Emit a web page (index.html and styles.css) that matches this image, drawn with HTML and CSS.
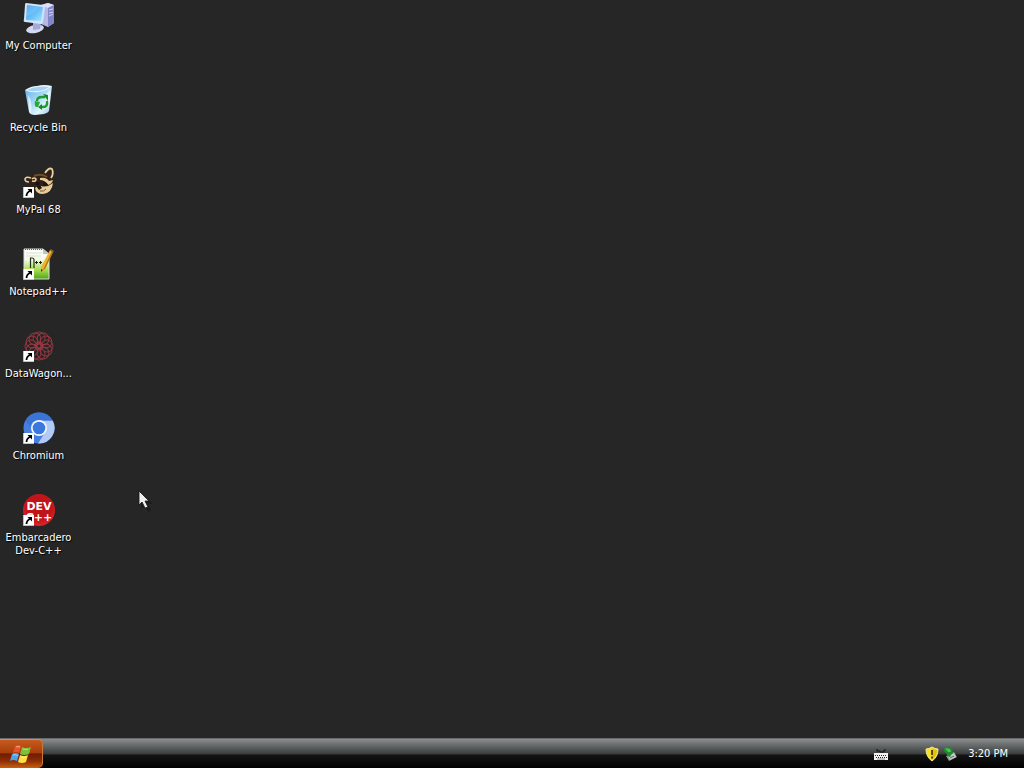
FILE: index.html
```html
<!doctype html>
<html lang="en">
    <head>
        <meta charset="UTF-8" />
        <meta name="viewport" content="width=device-width, initial-scale=1.0" />
        <title>Desktop</title>
        <link rel="stylesheet" href="styles.css">
    </head>
    <body>
        <svg class="defs" width="0" height="0" aria-hidden="true">
            <defs>
                <!-- shortcut arrow, shared by the icons -->
                <g id="shortcut">
                    <rect x="0" y="21" width="11" height="11" fill="#fff" />
                    <path d="M0 31.500h11M.5 21v11" stroke="#999" stroke-width=".6" />
                    <path d="M4.500 23H9v4.500z" fill="#000" />
                    <path d="M7.500 24.500Q3.500 26.500 3.500 30" fill="none" stroke="#000" stroke-width="1.800" />
                </g>
                <linearGradient id="screen" x1="0" y1="0" x2="1" y2="1">
                    <stop offset="0" stop-color="#3f97ea" />
                    <stop offset=".6" stop-color="#6cc6fa" />
                    <stop offset="1" stop-color="#a4e4ff" />
                </linearGradient>
                <linearGradient id="bin" x1="0" y1="0" x2="1" y2="1">
                    <stop offset="0" stop-color="#5aaeea" />
                    <stop offset=".45" stop-color="#a8d8f6" />
                    <stop offset=".7" stop-color="#e4f5fd" />
                    <stop offset="1" stop-color="#82bde2" />
                </linearGradient>
                <linearGradient id="paper" x1="0" y1="0" x2="0" y2="1">
                    <stop offset="0" stop-color="#fff" />
                    <stop offset=".35" stop-color="#f4fbe8" />
                    <stop offset=".7" stop-color="#a6dc4e" />
                    <stop offset="1" stop-color="#4fa41c" />
                </linearGradient>
                <radialGradient id="red" cx=".5" cy=".4" r=".6">
                    <stop offset="0" stop-color="#b8141a" />
                    <stop offset=".7" stop-color="#c5141a" />
                    <stop offset="1" stop-color="#e0262b" />
                </radialGradient>
            </defs>
        </svg>

        <main class="desktop">
            <button class="icon" type="button">
                <svg width="32" height="32" viewBox="0 0 32 32">
                    <path d="M18 3l7-2 6 2v18l-6 4-7-3z" fill="#b4b8e8" />
                    <path d="M18 3l7-2 6 2-6 3z" fill="#dcdff8" />
                    <path d="M25 6l6-3v18l-6 4z" fill="#8086c8" />
                    <path d="M26 8l4-1M26 11l4-1M26 14l4-2" stroke="#d4d8fa" />
                    <ellipse cx="12" cy="27" rx="9" ry="4" fill="#d5d8f2" transform="rotate(-12 12 27)" />
                    <path d="M10 20l8 1-1 6-7 1z" fill="#a4aada" />
                    <path d="M3 1l17 2q2 0 2 2l-2 15q0 2-2 2L2 20q-2 0-1-3L2 3q0-2 1-2z" fill="#d3e4fa" />
                    <path d="M4 3l16 2-2 14-15-1z" fill="url(#screen)" />
                    <path d="M4 3l12 2C12 9 10 13 3 14z" fill="#9bdcff" opacity=".3" />
                </svg>
                <span class="label">My Computer</span>
            </button>

            <button class="icon" type="button">
                <svg width="32" height="32" viewBox="0 0 32 32">
                    <path d="M2 6l12 1 15-5-3 25q-1 2-5 3l-9 1q-5 0-6-3z" fill="url(#bin)" />
                    <path d="M2 6q6-4 12-4 7-2 15 0-5 5-14 6-8 1-13-2z" fill="#eaf7ff" />
                    <path d="M4 6q6-3 11-3 5-1 11 0-5 4-12 4-6 1-10-1z" fill="#a4d2f3" />
                    <path d="M5 11q5 7 3 18-2 0-2-2zM27 5l-2 21-1-16z" fill="#f4fcff" opacity=".7" />
                    <path d="M14 17q0-4 5-4h3M24 17q1 6-4 6h-3" fill="none" stroke="#1d9b2e" stroke-width="2.400" />
                    <path d="M20 10l5 1v6zM19 20v6l-4-3z" fill="#168a25" />
                    <path d="M12 17l5 1-2 5h-2q-2-2-1-6z" fill="#2aa83a" />
                </svg>
                <span class="label">Recycle Bin</span>
            </button>

            <button class="icon" type="button">
                <svg width="32" height="32" viewBox="0 0 32 32">
                    <path d="M5 12Q12 7 20 7l6-5 4 3v13q-2 10-14 9L6 22z" fill="#2f2118" />
                    <path d="M22 7q4-6 7-4 2 5-1 9" fill="none" stroke="#ead0a0" stroke-width="1.800" />
                    <path d="M8 12q-5-2-6 1 0 3 4 3M9 13q2-2 4 0 0 3-4 2" fill="none" stroke="#e9cda0" stroke-width="1.600" />
                    <path d="M11 10q7-3 13 1" fill="none" stroke="#6e4d2c" stroke-width="2" />
                    <path d="M17 12q6-1 9 3l4-1q-1 4-5 5-3-5-8-5z" fill="#e7cb98" />
                    <path d="M12 17q3-2 5 0l-1 2h-4zM20 16q4 0 5 3l-4 1z" fill="#1c1511" />
                    <path d="M12 22q3-3 6-2 6 2 12-3-1 10-10 11-7 0-8-6z" fill="#e7cb98" />
                    <path d="M13 20l4-1 2 3-3 2z" fill="#21170f" />
                    <path d="M17 25q4 1 6-2" fill="none" stroke="#77552f" />
                    <use href="#shortcut" />
                </svg>
                <span class="label">MyPal 68</span>
            </button>

            <button class="icon" type="button">
                <svg width="32" height="32" viewBox="0 0 32 32">
                    <path d="M1 1h19l6 5v25H1z" fill="url(#paper)" stroke="#d8ddd5" />
                    <path d="M20 1v5h6z" fill="#bfc6ba" />
                    <path d="M2 1.500h18" stroke="#666" stroke-dasharray="1 1" />
                    <path d="M3 5h16M3 8h15" stroke="#d7e2d2" />
                    <path d="M7.500 20V10H9q2 0 2 2v8" fill="none" stroke="#25321b" stroke-width="1.200" />
                    <path d="M12 14.500h3M13.500 13v3M16 14.500h3M17.500 13v3" stroke="#18220f" />
                    <path d="M27 2l3 2-8 17-4 3v-5z" fill="#efb42e" />
                    <path d="M29 3l1 1-8 17-2 1z" fill="#b97318" />
                    <path d="M27 2l1-1 3 2-1 2z" fill="#8c5a37" />
                    <path d="M18 21l2 1-2 2z" fill="#54371b" />
                    <use href="#shortcut" />
                </svg>
                <span class="label">Notepad++</span>
            </button>

            <button class="icon" type="button">
                <svg width="32" height="32" viewBox="0 0 32 32">
                    <g fill="none" stroke="#9c3842" stroke-width=".9">
                        <!-- overlapping rings around the middle -->
                        <g id="rings">
                            <circle cx="16" cy="8" r="6" />
                            <circle cx="24" cy="16" r="6" />
                            <circle cx="16" cy="24" r="6" />
                            <circle cx="8" cy="16" r="6" />
                        </g>
                        <use href="#rings" transform="rotate(30 16 16)" />
                        <use href="#rings" transform="rotate(60 16 16)" />
                        <circle cx="16" cy="16" r="4" />
                    </g>
                    <use href="#shortcut" />
                </svg>
                <span class="label">DataWagon...</span>
            </button>

            <button class="icon" type="button">
                <svg width="32" height="32" viewBox="0 0 32 32">
                    <circle cx="16" cy="16" r="15.500" fill="#477fe0" />
                    <path d="M16 8.500h13.600A15.500 15.500 0 0 1 15 31.500l7.500-12z" fill="#b2cbf6" />
                    <path d="M2.500 8.500A15.500 15.500 0 0 1 29.600 8.500H16L9 17z" fill="#3a74d6" />
                    <circle cx="16" cy="16" r="8" fill="#f2f7ff" />
                    <circle cx="16" cy="16" r="6.300" fill="#3979df" />
                    <use href="#shortcut" />
                </svg>
                <span class="label">Chromium</span>
            </button>

            <button class="icon" type="button">
                <svg width="32" height="32" viewBox="0 0 32 32">
                    <circle cx="16" cy="16" r="16" fill="url(#red)" />
                    <text class="dev" text-anchor="middle"><tspan x="16" y="16">DEV</tspan><tspan x="16" y="27">C++</tspan></text>
                    <use href="#shortcut" />
                </svg>
                <span class="label">Embarcadero Dev-C++</span>
            </button>

            <svg class="cursor" width="16" height="22" viewBox="0 0 16 22">
                <path d="M3 3v16l4-3 3 6 3-2-3-6h5z" fill="#111" opacity=".5" />
                <path d="M1 1v14l3-3 3 6 3-1-3-6h4z" fill="#eee" stroke="#111" stroke-width=".8" />
            </svg>
        </main>

        <footer class="taskbar">
            <button class="start" type="button" aria-label="Start">
                <svg width="22" height="20" viewBox="0 0 22 20">
                    <path d="M5 2q4-2 6 0L9 9Q6 7 3 9z" fill="#e8542a" />
                    <path d="M12 3q4 2 9 0l-2 7q-5 2-9 0z" fill="#7cc038" />
                    <path d="M2 10q4-2 7 0l-2 7q-4-2-7 0z" fill="#4fa2ea" />
                    <path d="M10 11q4 2 8 0l-2 7q-4 2-8 0z" fill="#ffdd45" />
                    <path d="M6 3q2-1 4 0M13 5q3 1 5 0M3 11q3-1 5 1M11 13q3 1 5 0" fill="none" stroke="#fff" opacity=".5" />
                </svg>
            </button>
            <div class="tray">
                <button class="tray-btn keyboard" type="button" aria-label="Keyboard">
                    <svg width="16" height="16" viewBox="0 0 16 16">
                        <path d="M4 3v2h3v1h4V4h2" fill="none" stroke="#111" />
                        <rect x="1" y="7" width="14" height="7" fill="#f2f2f2" />
                        <path d="M2 9.500h12M3 11.500h11" stroke="#222" stroke-dasharray="1 1" />
                        <path d="M4 13h8" stroke="#888" />
                    </svg>
                </button>
                <button class="tray-btn" type="button" aria-label="Security alert">
                    <svg width="16" height="16" viewBox="0 0 16 16">
                        <path d="M8 1q3 2 6 2 0 8-6 12Q2 11 2 3q3 0 6-2z" fill="#f8e02a" stroke="#f4e98c" />
                        <path d="M8 2v12q5-4 5-10-3 0-5-2z" fill="#e3bd10" />
                        <path d="M8 4v5M8 10.500v2" stroke="#302807" stroke-width="1.600" />
                    </svg>
                </button>
                <button class="tray-btn" type="button" aria-label="Safely remove hardware">
                    <svg width="16" height="16" viewBox="0 0 16 16">
                        <path d="M3 10l8-4 3 5-8 4z" fill="#8c9693" />
                        <path d="M5 10l6-3 2 4-6 3z" fill="#c5cdcb" />
                        <path d="M7 12l4-2" stroke="#59615f" />
                        <path d="M1 2l3-1 5 1 1 5-2 2-1 2-3-1V8L1 5z" fill="#1f8a30" />
                        <path d="M2 2l5 1 1 3-3 0z" fill="#4cc356" />
                    </svg>
                </button>
                <time class="clock" datetime="15:20">3:20 PM</time>
            </div>
        </footer>
    </body>
</html>
```
FILE: styles.css
```css
* {
    box-sizing: border-box;
}
body {
    display: flex;
    flex-direction: column;
    min-height: 100vh;
    margin: 0;
    background-color: #262626;
    color: #fff;
    font-family: "DejaVu Sans Condensed", "DejaVu Sans", sans-serif;
    font-size: 11px;
    line-height: 13px;
}
button {
    padding: 0;
    border: none;
    background: none;
    color: inherit;
    font: inherit;
}
svg {
    display: block;
}
.defs {
    position: absolute;
}
/* Desktop */
.desktop {
    position: relative;
    flex: 1;
    display: grid;
    grid-template-columns: 77px;
    grid-auto-rows: 82px;
}
.icon {
    display: flex;
    flex-direction: column;
    align-items: center;
    gap: 5px;
    padding-top: 2px;
}
.label {
    text-align: center;
    text-shadow: 1px 1px 1px #000;
}
.dev {
    fill: #fff;
    font-family: "DejaVu Sans", sans-serif;
    font-size: 11px;
    font-weight: bold;
}
.cursor {
    position: absolute;
    left: 138px;
    top: 490px;
}
/* Taskbar */
.taskbar {
    display: flex;
    justify-content: space-between;
    height: 30px;
    border-top: 1px solid #6a6a6a;
    background: linear-gradient(#8b8e8e, #6a6d6e 20%, #3c3e3f 50%, #141414 56%, #000);
}
.start {
    display: flex;
    align-items: center;
    justify-content: center;
    width: 43px;
    border-top: 1px solid #e8884a;
    border-right: 1px solid #c87838;
    border-radius: 0 5px 5px 0;
    background: linear-gradient(#c65a1e, #a83e0c 45%, #6e1c00 50%, #8c2e04 75%, #c8600f);
}
.tray {
    display: flex;
    align-items: center;
    gap: 3px;
    padding-right: 16px;
}
.keyboard {
    margin-right: 32px;
}
.clock {
    margin-left: 6px;
}
```
